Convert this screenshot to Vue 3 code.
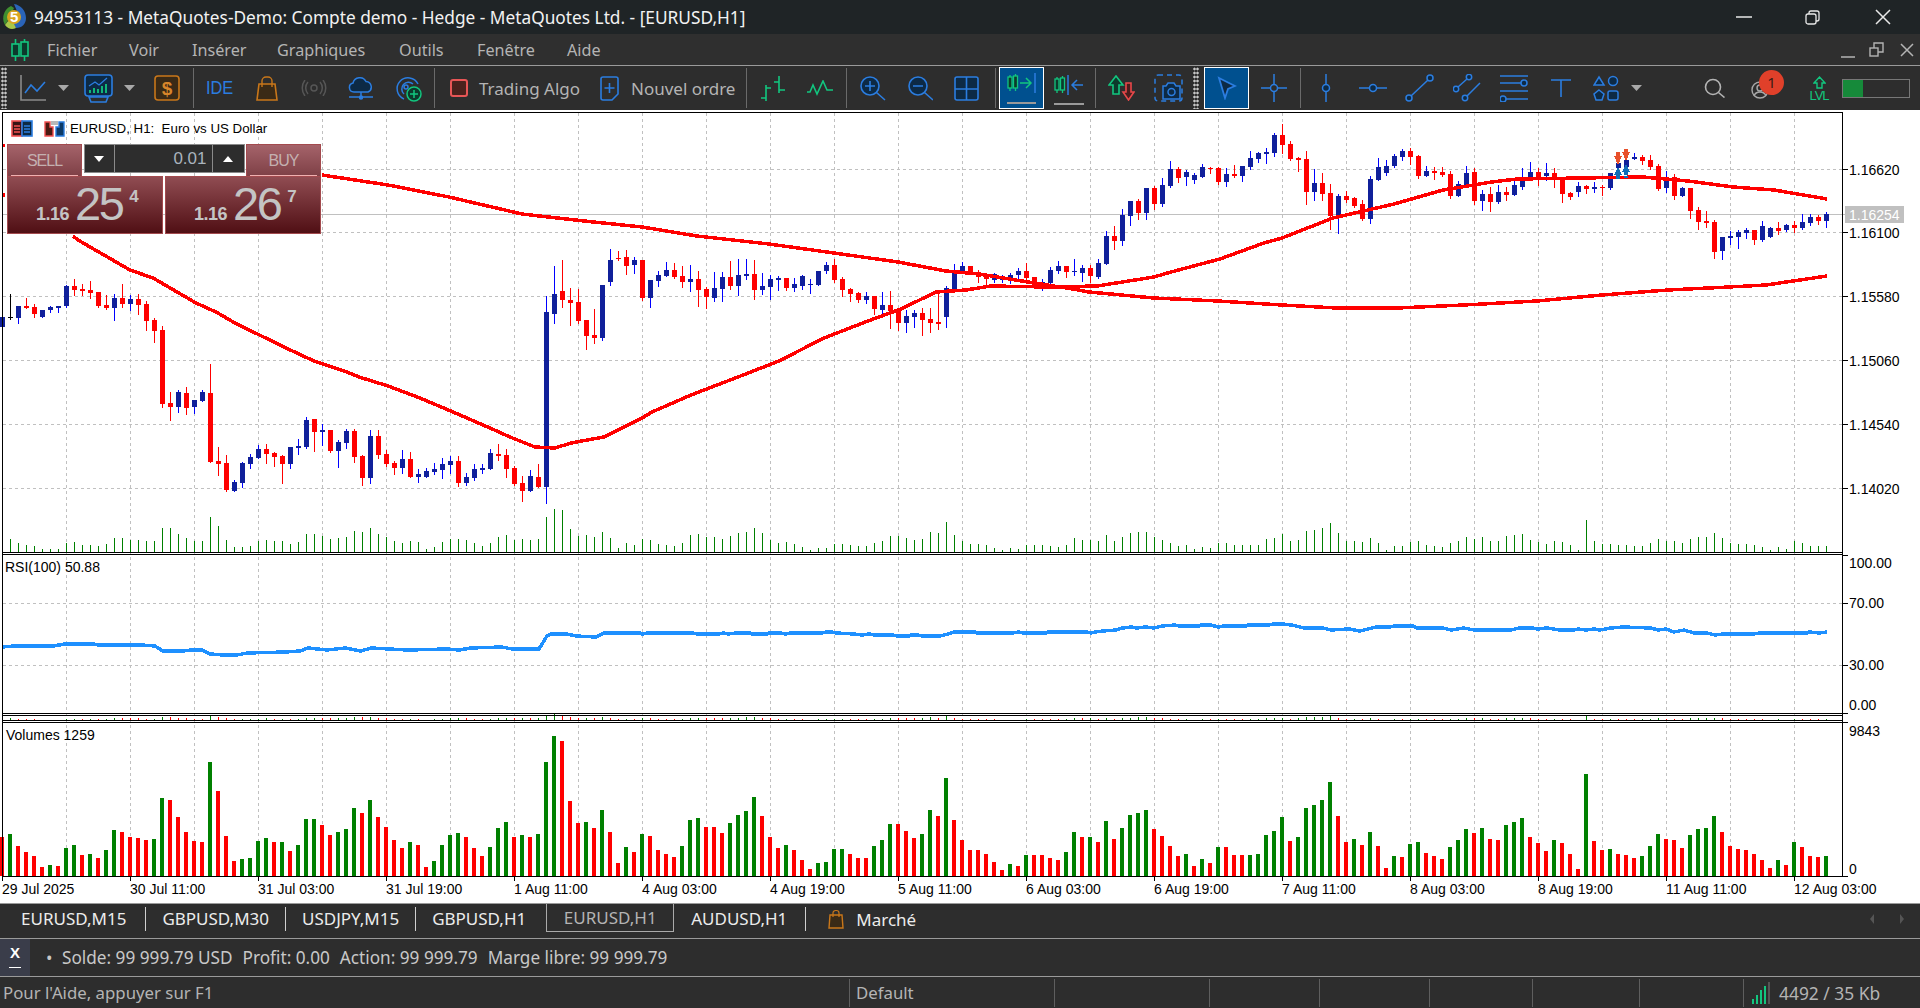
<template>
  <div class="app">
    <div class="title">
      <svg class="logo" width="24" height="26" viewBox="0 0 24 26">
        <path d="M3 21C-1 14 2 5 9 2l3 2-4 9z" fill="#3f8f2f" />
        <path d="M12 0c7 1 12 7 12 14 0 6-4 10-10 10l-3-4 6-8z" fill="#2a64b8" />
        <path d="M3 21c3 4 7 5 11 3l-3-6-5-1z" fill="#a8c84a" />
        <circle cx="12" cy="13" r="7" fill="#d9a520" />
        <text x="8" y="18" class="logo-five">5</text>
      </svg>
      <span class="title-text">94953113 - MetaQuotes-Demo: Compte demo - Hedge - MetaQuotes Ltd. - [EURUSD,H1]</span>
      <svg class="win-min" width="16" height="2" viewBox="0 0 16 2"><path d="M0 1H16" stroke="#e8e8e8" stroke-width="1.5" /></svg>
      <svg class="win-max" width="15" height="15" viewBox="0 0 15 15" fill="none" stroke="#e8e8e8" stroke-width="1.3">
        <rect x="1" y="4" width="10" height="10" rx="2" />
        <path d="M4 4V3a2 2 0 0 1 2-2h6a2 2 0 0 1 2 2v6a2 2 0 0 1-2 2h-1" />
      </svg>
      <svg class="win-close" width="16" height="16" viewBox="0 0 16 16"><path d="M1 1L15 15M15 1L1 15" stroke="#e8e8e8" stroke-width="1.5" /></svg>
    </div>

    <div class="menu">
      <svg class="menu-icon" width="18" height="22" viewBox="0 0 18 22" fill="#0c3a2c" stroke="#12c67f" stroke-width="1.6">
        <path d="M4.5 0V22M13.5 0V22" />
        <rect x="1" y="5" width="7" height="12" />
        <rect x="10" y="3" width="7" height="14" />
      </svg>
      <span v-for="m in menuItems" :key="m.label" :class="['menu-item', m.cls]">{{ m.label }}</span>
      <svg class="mdi-min" width="14" height="2" viewBox="0 0 14 2"><path d="M0 1H14" stroke="#b4b4b4" stroke-width="1.5" /></svg>
      <svg class="mdi-max" width="15" height="15" viewBox="0 0 15 15" fill="none" stroke="#b4b4b4" stroke-width="1.4">
        <rect x="1" y="6" width="8" height="8" />
        <path d="M5 6V1H14V10H9" />
      </svg>
      <svg class="mdi-close" width="14" height="14" viewBox="0 0 14 14"><path d="M1 1L13 13M13 1L1 13" stroke="#b4b4b4" stroke-width="1.5" /></svg>
    </div>

    <div class="toolbar">
      <span class="grip grip-a"></span>
      <svg class="t-line" width="26" height="26" viewBox="0 0 26 26" fill="none">
        <path d="M1 0V25H26" stroke="#8a8a8a" stroke-width="1.6" />
        <path d="M5 18L11 10L17 16L25 7" stroke="#2b7de0" stroke-width="1.6" />
      </svg>
      <svg class="drop t-drop1" width="11" height="6" viewBox="0 0 11 6"><path d="M0 0H11L5.500 6z" fill="#a8a8a8" /></svg>
      <svg class="t-sig" width="29" height="29" viewBox="0 0 29 29" fill="none" stroke="#2b7de0" stroke-width="1.6">
        <rect x="1" y="1" width="27" height="21" rx="3" fill="#0d2a45" />
        <path d="M5 23H24L22 28H7z" />
        <path d="M5 12L11 8L15 11L23 4" stroke-width="1.3" />
        <path d="M6 19V16M10 19V14M14 19V15M18 19V12M22 19V10" stroke="#12c67f" stroke-width="1.8" />
      </svg>
      <svg class="drop t-drop2" width="11" height="6" viewBox="0 0 11 6"><path d="M0 0H11L5.500 6z" fill="#a8a8a8" /></svg>
      <svg class="t-dollar" width="26" height="26" viewBox="0 0 26 26">
        <rect x="1" y="1" width="24" height="24" rx="3" fill="#3a2a16" stroke="#c9771a" stroke-width="1.6" />
        <text x="13" y="19.500" class="dollar">$</text>
      </svg>
      <span class="sep sep-a"></span>
      <span class="ide">IDE</span>
      <svg class="t-bag" width="22" height="25" viewBox="0 0 22 25">
        <path d="M3 8H19L21 24H1z" fill="#3a2a16" stroke="#c9771a" stroke-width="1.6" />
        <path d="M6 11V5a4 4 0 0 1 4-4h2a4 4 0 0 1 4 4v6" fill="none" stroke="#c9771a" stroke-width="1.4" />
      </svg>
      <svg class="t-wifi" width="26" height="16" viewBox="0 0 26 16" fill="none" stroke="#565656" stroke-width="1.5">
        <circle cx="13" cy="8" r="3" />
        <path d="M7 2a9 9 0 0 0 0 12M19 2a9 9 0 0 1 0 12M4 0a13 13 0 0 0 0 16M22 0a13 13 0 0 1 0 16" />
      </svg>
      <svg class="t-cloud" width="26" height="23" viewBox="0 0 26 23" fill="none" stroke="#2b7de0" stroke-width="1.5">
        <path d="M6 15a4.500 4.500 0 0 1-1-8.900A7 7 0 0 1 18 4.500 5.500 5.500 0 0 1 20 15z" fill="#0d2a45" />
        <path d="M13 15V20M1 20H25" />
        <circle cx="13" cy="20.500" r="1.500" fill="#2b7de0" />
      </svg>
      <svg class="t-sigplus" width="27" height="27" viewBox="0 0 27 27" fill="none" stroke="#2b7de0" stroke-width="1.5">
        <path d="M9 24A11 11 0 1 1 23 9" />
        <path d="M9 19A6 6 0 1 1 18 9" />
        <circle cx="11" cy="12" r="2" />
        <circle cx="19" cy="19" r="7" fill="#0c3a2c" stroke="#12c67f" />
        <path d="M19 15V23M15 19H23" stroke="#12c67f" />
      </svg>
      <span class="sep sep-b"></span>
      <span class="red-square"></span>
      <span class="tool-text t-algo">Trading Algo</span>
      <svg class="t-doc" width="19" height="25" viewBox="0 0 19 25" fill="none" stroke="#2b7de0" stroke-width="1.6">
        <path d="M3 1H16a2 2 0 0 1 2 2V18L12 24H3a2 2 0 0 1-2-2V3a2 2 0 0 1 2-2z" />
        <path d="M9.500 7V17M4.500 12H14.500" />
      </svg>
      <span class="tool-text t-order">Nouvel ordre</span>
      <span class="sep sep-c"></span>
      <svg class="t-bars" width="26" height="25" viewBox="0 0 26 25" fill="none" stroke="#12c67f" stroke-width="1.6">
        <path d="M6 9V25M1 22H6M6 12H11M19 0V17M14 6H19M19 14H25" />
      </svg>
      <svg class="t-wave" width="26" height="16" viewBox="0 0 26 16" fill="none" stroke="#12c67f" stroke-width="1.6">
        <path d="M0 12H3L6 5L10 14L16 1L20 10H26" />
      </svg>
      <span class="sep sep-d"></span>
      <svg class="t-zoomin" width="26" height="25" viewBox="0 0 26 25" fill="none" stroke="#2b7de0" stroke-width="1.6">
        <circle cx="10" cy="10" r="9" fill="#0d2a45" />
        <path d="M10 5V15M5 10H15M16.500 16.500L25 24" />
      </svg>
      <svg class="t-zoomout" width="25" height="25" viewBox="0 0 25 25" fill="none" stroke="#2b7de0" stroke-width="1.6">
        <circle cx="10" cy="10" r="9" fill="#0d2a45" />
        <path d="M5 10H15M16.500 16.500L25 24" />
      </svg>
      <svg class="t-grid" width="25" height="25" viewBox="0 0 25 25" fill="#0d2a45" stroke="#2b7de0" stroke-width="1.6">
        <rect x="1" y="1" width="23" height="23" rx="2" />
        <path d="M12.500 1V24M1 13H24" />
      </svg>
      <span class="sep sep-e"></span>
      <span class="tool-btn t-shift">
        <svg width="29" height="34" viewBox="0 0 29 34" fill="none" stroke="#12c67f" stroke-width="1.3">
          <path d="M3 4V20M8.500 3V20" />
          <rect x="1" y="6" width="4" height="11" fill="#0c3a2c" />
          <rect x="6.500" y="5" width="4" height="12" fill="#0c3a2c" />
          <path d="M13 12H24M19 7L24 12L19 17" stroke-width="1.5" />
          <path d="M28 2V22" stroke="#2b7de0" stroke-width="1.5" />
          <path d="M0 32H29" stroke="#9a9a9a" stroke-width="2" />
        </svg>
      </span>
      <svg class="t-autoscroll" width="30" height="34" viewBox="0 0 30 34" fill="none" stroke="#12c67f" stroke-width="1.3">
        <path d="M3 6V22M8.500 5V22" />
        <rect x="1" y="8" width="4" height="11" fill="#0c3a2c" />
        <rect x="6.500" y="7" width="4" height="12" fill="#0c3a2c" />
        <path d="M14 4V24" stroke="#2b7de0" stroke-width="1.5" />
        <path d="M29 14H18M23 9L18 14L23 19" stroke="#2b7de0" stroke-width="1.5" />
        <path d="M0 33H30" stroke="#9a9a9a" stroke-width="2" />
      </svg>
      <span class="sep sep-f"></span>
      <svg class="t-arrows" width="27" height="26" viewBox="0 0 27 26" fill="none" stroke-width="1.6">
        <path d="M5 10H1L8 1L15 10H11V19H5z" fill="#0c3a2c" stroke="#12c67f" />
        <path d="M18 8H23V17H26L20.500 25L15 17H18z" fill="#4a1d1d" stroke="#e8484a" />
      </svg>
      <svg class="t-camera" width="29" height="28" viewBox="0 0 29 28" fill="none" stroke="#2b7de0" stroke-width="1.5">
        <rect x="1" y="1" width="27" height="26" rx="3" stroke-dasharray="5 4" />
        <path d="M9 12H12L14 9H20L22 12H26V25H9z" fill="#0d2a45" />
        <circle cx="17.500" cy="18" r="3.500" />
      </svg>
      <span class="grip grip-b"></span>
      <span class="tool-btn t-cursor">
        <svg width="20" height="24" viewBox="0 0 20 24" fill="#0d2a45" stroke="#2b7de0" stroke-width="1.8">
          <path d="M2 2L18 10L11 13L8 22z" />
        </svg>
      </span>
      <svg class="t-cross" width="26" height="28" viewBox="0 0 26 28" fill="none" stroke="#2b7de0" stroke-width="1.5">
        <path d="M13 0V10M13 18V28M0 14H9M17 14H26" />
        <circle cx="13" cy="14" r="3.500" />
      </svg>
      <span class="sep sep-g"></span>
      <svg class="t-vline" width="10" height="28" viewBox="0 0 10 28" fill="none" stroke="#2b7de0" stroke-width="1.5">
        <path d="M5 0V10M5 18V28" />
        <circle cx="5" cy="14" r="3.500" fill="#0d2a45" />
      </svg>
      <svg class="t-hline" width="28" height="10" viewBox="0 0 28 10" fill="none" stroke="#2b7de0" stroke-width="1.5">
        <path d="M0 5H10M18 5H28" />
        <circle cx="14" cy="5" r="3.500" fill="#0d2a45" />
      </svg>
      <svg class="t-trend" width="29" height="28" viewBox="0 0 29 28" fill="none" stroke="#2b7de0" stroke-width="1.5">
        <path d="M6 22L23 6" />
        <circle cx="4" cy="24" r="3" fill="#0d2a45" />
        <circle cx="25" cy="4" r="3" fill="#0d2a45" />
      </svg>
      <svg class="t-channel" width="28" height="28" viewBox="0 0 28 28" fill="none" stroke="#2b7de0" stroke-width="1.5">
        <path d="M5 13L14 5M14 22L27 9" />
        <circle cx="3" cy="15" r="2.700" fill="#0d2a45" />
        <circle cx="16" cy="3" r="2.700" fill="#0d2a45" />
        <circle cx="12" cy="24" r="2.700" fill="#0d2a45" />
      </svg>
      <svg class="t-fib" width="28" height="27" viewBox="0 0 28 27" fill="none" stroke="#2b7de0" stroke-width="1.5">
        <path d="M0 1H28M0 8H21M0 16H28M6 24H28" />
        <circle cx="24" cy="8" r="3" fill="#0d2a45" />
        <circle cx="3" cy="24" r="3" fill="#0d2a45" />
      </svg>
      <svg class="t-text" width="20" height="18" viewBox="0 0 20 18" fill="none" stroke="#2b7de0" stroke-width="1.6">
        <path d="M0 1H20M10 1V18" />
      </svg>
      <svg class="t-shapes" width="26" height="26" viewBox="0 0 26 26" fill="#0d2a45" stroke="#2b7de0" stroke-width="1.5">
        <path d="M6 2L11 10H1z" />
        <circle cx="20" cy="6" r="4.500" />
        <path d="M6 15L11 19L9 25H3L1 19z" />
        <rect x="15" y="16" width="10" height="9" rx="2" />
      </svg>
      <svg class="drop t-drop3" width="11" height="6" viewBox="0 0 11 6"><path d="M0 0H11L5.500 6z" fill="#a8a8a8" /></svg>
      <svg class="t-search" width="21" height="20" viewBox="0 0 21 20" fill="none" stroke="#b4b4b4" stroke-width="1.6">
        <circle cx="9" cy="9" r="7.500" />
        <path d="M14.500 14.500L20.500 19.500" />
      </svg>
      <span class="t-user">
        <svg width="18" height="18" viewBox="0 0 18 18" fill="none" stroke="#a8a8a8" stroke-width="1.4">
          <circle cx="9" cy="9" r="8" />
          <circle cx="9" cy="7" r="3" />
          <path d="M3 15c1-3 3-4 6-4s5 1 6 4" />
        </svg>
        <span class="badge">1</span>
      </span>
      <span class="t-lvl">
        <svg width="13" height="13" viewBox="0 0 13 13" fill="none" stroke="#12c67f" stroke-width="1.4">
          <path d="M1 7L6.500 1L12 7H9V12H4V7z" />
        </svg>
        <span class="lvl-text">LVL</span>
      </span>
      <span class="t-progress"><span class="t-progress-fill"></span></span>
    </div>

    <div class="chart">
      <svg class="plot" width="1920" height="793" viewBox="0 110 1920 793" shape-rendering="crispEdges">
        <!-- grille -->
        <path v-for="x in gridX" :key="'g' + x" :d="`M${x}.5 113V876`" class="grid" />
        <path v-for="y in gridY" :key="'h' + y" :d="`M3 ${y}.5H1842`" class="grid" />
        <path d="M3 214.500H1904" stroke="#c0c0c0" fill="none" />

        <!-- volumes dans le graphique principal -->
        <rect v-for="b in vols" :key="'mv' + b.i" :x="b.x" :y="552 - b.small" width="1" :height="b.small" fill="#008000" />

        <!-- bougies -->
        <template v-for="c in candles" :key="'c' + c.i">
          <rect :x="c.x" :y="c.h" width="1" :height="c.l - c.h" :fill="c.wick" />
          <rect :x="c.x - 2" :y="c.t" width="5" :height="Math.max(c.b - c.t, 1)" :fill="c.body" />
        </template>

        <!-- moyennes mobiles -->
        <polyline :points="slowMa" class="ma" />
        <polyline :points="fastMa" class="ma" />

        <!-- fleches de trades -->
        <g fill="#e8502a">
          <path d="M1614 156H1622L1618 165zM1622 152H1630L1626 161z" />
          <path d="M1616 152H1620V156H1616zM1624 149H1628V152H1624z" />
        </g>
        <g fill="#0f6cb8">
          <path d="M1614 175H1622L1618 167zM1622 172H1630L1626 164z" />
          <path d="M1616 175H1620V179H1616zM1624 172H1628V175H1624zM1624 176H1628V178H1624z" />
        </g>
        <rect x="3" y="144" width="2" height="3" fill="#ff0000" />
        <rect x="3" y="193" width="2" height="4" fill="#ff0000" />

        <!-- RSI -->
        <polyline :points="rsi" class="rsi" />

        <!-- volumes -->
        <rect v-for="b in vols" :key="'v' + b.i" :x="b.x - 2" :y="876 - b.height" width="4" :height="b.height" :fill="b.color" />
        <rect v-for="b in vols" :key="'t' + b.i" :x="b.x" :y="720 - b.tiny" width="1" :height="b.tiny" :fill="b.color" />

        <!-- cadres -->
        <g fill="#000">
          <rect x="2" y="112" width="1841" height="1" />
          <rect x="2" y="112" width="1" height="765" />
          <rect x="1842" y="112" width="1" height="765" />
          <rect x="2" y="552" width="1841" height="1" />
          <rect x="2" y="554" width="1841" height="1" />
          <rect x="2" y="713" width="1841" height="1" />
          <rect x="2" y="715" width="1841" height="1" />
          <rect x="2" y="720" width="1841" height="1" />
          <rect x="2" y="722" width="1841" height="1" />
          <rect x="2" y="876" width="1841" height="1" />
          <rect v-for="s in scale" :key="'st' + s.tick" x="1843" :y="s.tick" width="5" height="1" />
          <rect v-for="t in times" :key="'tt' + t.x" :x="t.x" y="877" width="1" height="4" />
        </g>

        <g shape-rendering="auto">
          <rect x="1845" y="206" width="59" height="17" fill="#c0c0c0" />
          <text x="1849" y="220" class="lbl tag">1.16254</text>
          <text v-for="s in scale" :key="s.text" x="1849" :y="s.y" class="lbl">{{ s.text }}</text>
          <text v-for="t in times" :key="t.text" :x="t.x" y="894" class="lbl">{{ t.text }}</text>
          <text x="5" y="572" class="lbl">RSI(100) 50.88</text>
          <text x="6" y="740" class="lbl">Volumes 1259</text>
        </g>
      </svg>

      <div class="chart-head">
        <svg width="22" height="17" viewBox="0 0 22 17">
          <rect x="1" y="1" width="10" height="15" fill="#3a1414" stroke="#f25050" stroke-width="1.6" />
          <rect x="11" y="1" width="10" height="15" fill="#0d2a45" stroke="#2b7de0" stroke-width="1.6" />
          <path d="M3 6H9M3 9H9M3 12H9" stroke="#f25050" stroke-width="1.5" />
          <path d="M13 6H19M13 9H19M13 12H19" stroke="#2b7de0" stroke-width="1.5" />
        </svg>
        <svg class="head-two" width="21" height="17" viewBox="0 0 21 17">
          <path d="M1 2H6V7H9V16H1z" fill="#4a1a12" stroke="#f25050" stroke-width="1.4" />
          <path d="M20 2H15V7H12V16H20z" fill="#0d3a66" stroke="#2b7de0" stroke-width="1.4" />
          <rect x="7" y="1" width="7" height="4" fill="#b8b8b8" />
        </svg>
        <span class="head-text">EURUSD, H1:&nbsp; Euro vs US Dollar</span>
      </div>

      <div class="oneclick">
        <div class="oc-top">
          <div class="oc-side">SELL</div>
          <div class="oc-lot">
            <span class="oc-step"><i class="tri-down"></i></span>
            <span class="oc-value">0.01</span>
            <span class="oc-step last"><i class="tri-up"></i></span>
          </div>
          <div class="oc-side">BUY</div>
        </div>
        <div class="oc-prices">
          <div class="oc-price">
            <span class="p-small">1.16</span><span class="p-big">25</span><span class="p-sup">4</span>
          </div>
          <div class="oc-price">
            <span class="p-small">1.16</span><span class="p-big">26</span><span class="p-sup">7</span>
          </div>
        </div>
      </div>
    </div>

    <div class="tabs">
      <span v-for="t in tabs" :key="t" :class="['tab', { active: t === 'EURUSD,H1', 'no-line': t === 'GBPUSD,H1' }]">{{ t }}</span>
      <svg class="tab-bag" width="16" height="20" viewBox="0 0 16 20">
        <path d="M2 6H14L15 19H1z" fill="#3a2a16" stroke="#c9771a" stroke-width="1.4" />
        <path d="M5 8V4a2.500 2.500 0 0 1 2.500-2.500h1A2.500 2.500 0 0 1 11 4v4" fill="none" stroke="#c9771a" stroke-width="1.2" />
      </svg>
      <span class="tab-label">Marché</span>
      <span class="tab-arrows"><i class="arrow-left"></i><i class="arrow-right"></i></span>
    </div>

    <div class="info">
      <div class="info-close"><b>X</b><span class="info-dash"></span></div>
      <span class="dot">•</span>
      <span class="info-item first">Solde: 99 999.79 USD</span>
      <span class="info-item">Profit: 0.00</span>
      <span class="info-item">Action: 99 999.79</span>
      <span class="info-item">Marge libre: 99 999.79</span>
    </div>

    <div class="status">
      <span class="st-help">Pour l'Aide, appuyer sur F1</span>
      <span class="st-cell st-default">Default</span>
      <span class="st-cell st-a"></span>
      <span class="st-cell st-b"></span>
      <span class="st-cell st-c"></span>
      <span class="st-cell st-d"></span>
      <span class="st-cell st-e"></span>
      <span class="st-cell st-f"></span>
      <span class="st-cell st-net">
        <svg width="20" height="24" viewBox="0 0 20 24" fill="#12c67f">
          <rect x="0" y="18" width="2" height="5" />
          <rect x="4" y="14" width="2" height="9" />
          <rect x="8" y="9" width="2" height="14" />
          <rect x="12" y="5" width="2" height="18" />
          <rect x="16" y="1" width="2" height="22" fill="#555" />
        </svg>
        <span class="st-net-text">4492 / 35 Kb</span>
      </span>
    </div>
  </div>
</template>

<script setup>
const menuItems = [
  { label: 'Fichier', cls: 'm-a' },
  { label: 'Voir', cls: 'm-b' },
  { label: 'Insérer', cls: 'm-c' },
  { label: 'Graphiques', cls: 'm-d' },
  { label: 'Outils', cls: 'm-e' },
  { label: 'Fenêtre', cls: 'm-f' },
  { label: 'Aide', cls: 'm-g' }
]

const tabs = ['EURUSD,M15', 'GBPUSD,M30', 'USDJPY,M15', 'GBPUSD,H1', 'EURUSD,H1', 'AUDUSD,H1']

const gridX = Array.from({ length: 29 }, (_, k) => 2 + 64 * k)
const gridY = [169, 232, 296, 360, 424, 488, 603, 665]

const timeLabels = ['29 Jul 2025', '30 Jul 11:00', '31 Jul 03:00', '31 Jul 19:00', '1 Aug 11:00', '4 Aug 03:00', '4 Aug 19:00', '5 Aug 11:00',
  '6 Aug 03:00', '6 Aug 19:00', '7 Aug 11:00', '8 Aug 03:00', '8 Aug 19:00', '11 Aug 11:00', '12 Aug 03:00']
const times = timeLabels.map((text, k) => ({ text, x: 2 + 128 * k }))

const scale = [
  { text: '1.16620', tick: 169, y: 175 },
  { text: '1.16100', tick: 232, y: 238 },
  { text: '1.15580', tick: 296, y: 302 },
  { text: '1.15060', tick: 360, y: 366 },
  { text: '1.14540', tick: 424, y: 430 },
  { text: '1.14020', tick: 488, y: 494 },
  { text: '100.00', tick: 555, y: 568 },
  { text: '70.00', tick: 603, y: 608 },
  { text: '30.00', tick: 665, y: 670 },
  { text: '0.00', tick: 713, y: 710 },
  { text: '9843', tick: 722, y: 736 },
  { text: '0', tick: 876, y: 874 }
]

// 0 = hausse (bleu), 1 = baisse (rouge), 2 = doji noir ; [type, haut, corps haut, corps bas, bas]
const candleRows = [
  [240, [[0,232,232,262,262],[2,162,232,233,238],[0,198,198,233,248],[1,175,198,204,205],[1,192,201,222,230],[0,210,210,230,230],[0,198,202,210,215],[0,198,198,203,215],[0,135,138,197,200],[1,117,138,150,165],
    [1,132,147,152,165],[1,123,150,158,173],[1,156,156,198,200],[1,165,195,204,208],[0,162,174,204,240],[1,132,174,192,200],[0,165,177,192,210],[1,162,177,195,222],[1,183,192,243,270],[1,234,240,273,306],
    [1,258,270,492,500],[1,456,489,501,540],[0,450,456,501,516],[1,441,459,504,522],[0,480,480,501,520],[0,450,456,483,483],[1,372,459,666,666],[1,621,663,672,705],[1,645,669,750,752],[0,720,726,752,752],
    [0,666,669,729,741],[0,642,651,672,684],[0,615,627,654,654],[1,612,627,642,669],[1,636,639,651,678],[1,645,648,672,729],[0,621,621,672,684],[0,597,618,624,642],[0,531,540,621,624],[1,537,537,576,633],
    [0,552,570,576,615],[1,570,570,633,636],[0,600,606,633,681],[0,567,573,609,624],[1,567,573,651,666],[1,645,648,714,735],[0,570,588,714,729],[1,570,588,645,654],[1,630,642,672,678],[1,663,669,684,702],
    [0,630,657,684,699],[1,636,657,711,711],[0,687,702,711,726],[0,684,693,711,711],[0,669,687,696,702],[0,654,672,690,714],[0,648,663,675,699],[1,648,663,729,738],[0,699,711,729,735],[0,672,687,714,720],
    [0,672,684,690,699],[0,627,639,687,687],[1,612,642,648,660],[1,627,645,687,711],[1,678,684,732,735],[1,708,729,753,783],[0,690,708,753,753],[1,672,711,741,741],[0,168,216,741,789],[0,78,162,222,249],
    [1,60,153,180,201],[1,144,180,189,255],[1,147,186,243,249],[1,240,240,288,327],[1,207,285,294,309],[0,135,135,294,300],[0,27,60,126,135],[1,33,54,58,60],[1,30,51,78,102],[0,51,60,75,99]]],
  [110, [[1,450,450,565,570],[0,510,510,564,591],[0,483,495,513,528],[0,456,480,498,498],[1,459,480,501,504],[1,468,498,516,531],[0,465,507,516,543],[1,483,507,540,588],[1,531,537,561,594],[0,486,534,564,573],
    [0,486,501,537,573],[1,453,501,528,537],[0,447,495,528,555],[0,447,492,498,507],[1,450,492,540,567],[0,489,528,540,552],[0,495,507,531,567],[0,498,504,510,540],[1,504,504,534,540],[0,504,522,534,543],
    [0,495,498,528,537],[0,507,522,525,549],[0,483,483,525,525],[0,456,465,483,489],[1,447,465,510,516],[1,501,507,540,558],[1,534,537,552,573],[1,546,549,570,576],[0,546,558,570,579],[1,558,558,597,612],
    [0,546,585,600,621],[1,543,585,603,654],[1,603,603,639,660],[0,600,618,639,666],[0,600,609,621,651],[1,594,609,630,675],[1,594,627,639,666],[1,543,636,641,657],[0,528,534,621,651],[0,462,480,540,540],
    [0,456,468,483,483],[1,468,468,486,490],[1,480,487,500,516],[1,495,498,506,528],[0,489,492,510,516],[0,495,504,510,516],[0,489,495,510,519],[0,474,483,495,507],[1,459,483,504,507],[1,501,501,528,531],
    [0,507,516,528,540],[0,471,480,519,519],[0,453,468,483,489],[1,468,468,486,501],[0,447,483,486,495],[0,465,474,489,513],[1,465,474,498,516],[0,447,459,501,504],[0,363,378,462,462],[1,348,378,393,417],
    [0,297,315,393,405],[0,273,273,318,345],[1,267,273,309,327],[0,234,234,309,327],[1,228,234,282,297],[0,204,225,282,288],[0,153,177,228,231],[1,171,177,204,216],[0,180,186,201,225],[0,189,195,210,219],
    [0,162,171,201,201],[1,171,174,177,189],[1,171,174,216,222],[0,174,192,216,228],[1,165,192,198,201],[0,168,168,198,213],[0,123,144,171,177],[0,126,129,147,156],[0,114,126,132,159],[0,69,75,129,138]]],
  [110, [[1,42,75,105,129],[1,93,102,147,150],[1,141,144,150,183],[1,123,147,246,282],[0,177,219,246,270],[1,189,219,252,270],[1,222,249,318,357],[0,252,258,318,369],[1,243,258,270,276],[1,261,264,288,291],
    [1,270,282,327,330],[0,198,207,327,339],[0,144,171,210,210],[0,150,168,189,195],[0,132,138,168,171],[0,117,123,141,150],[1,114,123,141,162],[1,135,138,198,204],[0,168,183,198,198],[1,171,183,189,207],
    [1,171,186,195,198],[1,183,192,258,264],[0,213,222,258,258],[0,168,189,225,225],[1,174,186,273,282],[0,240,252,273,300],[1,231,252,276,303],[0,225,246,276,279],[1,231,246,255,270],[0,213,225,255,255],
    [0,174,201,231,237],[0,156,186,204,207],[1,174,186,207,225],[0,159,189,198,210],[1,174,189,204,231],[1,204,204,252,276],[1,246,249,261,267],[0,216,228,246,258],[1,225,228,237,249],[0,216,231,237,246],
    [1,225,231,234,255],[0,189,189,234,238],[0,150,160,175,178],[0,140,150,170,178],[0,129,141,147,147],[1,135,141,153,162],[1,135,150,171,177],[1,162,168,237,240],[0,183,201,234,246],[1,192,201,258,267],
    [0,231,234,258,258],[1,234,234,303,324],[1,291,300,336,357],[1,303,333,339,351],[1,330,336,426,444],[0,381,381,423,447],[0,363,378,384,402],[0,360,366,381,414],[0,354,360,369,384],[1,360,360,390,402],
    [0,333,348,390,393],[0,351,354,381,381],[1,336,354,363,372],[0,342,345,360,363],[1,333,345,354,366],[0,312,336,354,357],[0,312,321,339,345],[1,315,321,333,342],[0,306,312,333,351]]]
]

const colours = [
  { wick: '#0000ff', body: '#10209a' },
  { wick: '#ff0000', body: '#ff0000' },
  { wick: '#000000', body: '#000000' }
]

let index = 0
const candles = []
for (const [off, rows] of candleRows) {
  for (const [kind, h, t, b, l] of rows) {
    const toY = (z) => Math.round(off + z / 3)
    candles.push({ i: index, x: 2 + 8 * index, h: toY(h), t: toY(t), b: toY(b), l: toY(l) + 1, ...colours[kind] })
    index++
  }
}

// hauteur lue sur le zoom ; negatif = barre rouge
const volumeRaw = [-981,972,-1008,-1026,-1038,-1071,1065,-1068,1014,1005,-1035,1032,-1044,1020,960,-966,-981,-984,-990,987,
  864,-870,-921,-966,-993,-996,756,-843,-978,-1053,1047,1044,993,984,-996,996,-1023,1005,927,927,
  -945,-975,966,957,894,-909,870,-921,-951,-990,-1014,996,-1005,-1071,1053,1005,975,969,-981,-1014,
  -1038,1011,954,936,-981,975,-981,972,756,678,-693,-873,-939,936,-954,900,-966,-1059,1011,-1026,
  972,-978,-1020,-1032,-1041,1008,930,924,-951,-951,-969,939,915,903,861,-918,-981,-1014,1005,-1020,
  -1050,-1077,1059,1056,1017,1017,-1032,-1044,-1044,1008,990,942,-942,-963,-984,972,900,-918,804,-930,
  -990,-1020,-1020,-1032,-1056,-1081,1062,-1068,1035,-1035,-1035,-1044,-1050,1026,966,-981,981,-996,933,-987,
  954,915,909,900,-957,-978,-1008,-1038,1032,-1068,1047,-1059,1011,-1011,-1035,-1035,1035,1032,975,963,
  921,-993,981,894,885,870,816,-918,-996,987,-1005,966,-1008,-1074,1038,-1041,1002,996,-1029,-1038,
  -1047,1011,990,957,-969,954,-987,-990,945,936,924,-981,-999,-1023,990,-999,-1032,-1077,792,-993,
  -1020,1017,-1032,-1035,-1044,1038,1008,972,-987,-990,-1014,975,957,954,918,-966,-1008,-1017,-1020,-1032,
  -1050,-1074,1050,-1065,996,-1011,-1038,-1041,1038]

const vols = volumeRaw.map((v, i) => {
  const height = Math.round(876 - (510 + Math.abs(v) / 3))
  return {
    i,
    x: 2 + 8 * i,
    height,
    small: Math.round(height * 0.31),
    tiny: Math.round(height * 0.04),
    color: v < 0 ? '#ff0000' : '#008000'
  }
})

const slowMa = [[322,175],[388,185],[449,197],[522,214],[584,221],[642,227],[697,236],[769,244],[834,253],[898,262],[946,271],[979,274],[1028,282],[1073,289],[1089,292],[1154,298],[1218,301],[1282,305],[1337,308],[1398,308],[1464,305],[1537,301],[1602,295],[1668,290],[1729,287],[1766,285],[1827,276]].join(' ')
const fastMa = [[73,236],[78,240],[130,270],[153,278],[196,303],[216,312],[235,323],[286,348],[314,361],[347,372],[359,377],[388,386],[420,398],[453,412],[490,428],[510,437],[535,447],[555,448],[571,443],[604,437],[624,427],[642,418],[652,412],[691,395],[738,377],[779,361],[824,338],[868,321],[901,309],[936,292],[966,290],[991,286],[1048,287],[1097,286],[1154,277],[1171,272],[1220,259],[1264,243],[1282,238],[1333,218],[1394,204],[1443,190],[1492,182],[1517,179],[1582,178],[1643,177],[1688,181],[1733,187],[1774,190],[1827,199]].join(' ')

const rsiRows = [
  [0, [[5,412],[35,409],[130,409],[160,403],[230,403],[240,406],[270,405],[290,404],[310,405],[345,406],[380,408],[400,424],[425,422],[445,424],[470,421],[495,421],[515,433],[550,436],[580,436],[605,428],[700,427],[735,423],[755,415],[800,421],[845,415],[885,424],[910,415],[1000,420],[1095,416],[1125,421],[1155,415],[1230,412],[1255,418],[1320,418],[1340,378],[1350,373],[1390,373],[1410,378],[1460,381],[1480,370],[1568,368]]],
  [640, [[5,372],[20,370],[130,370],[140,373],[190,373],[205,370],[215,373],[235,370],[270,370],[275,373],[310,373],[315,370],[345,370],[355,373],[370,370],[445,370],[455,366],[470,366],[480,370],[525,373],[545,374],[560,372],[575,376],[620,376],[630,379],[660,379],[665,376],[680,376],[690,379],[735,379],[755,373],[770,367],[820,367],[825,370],[915,370],[925,367],[940,370],[995,370],[1000,367],[1095,367],[1105,370],[1115,367],[1135,362],[1165,361],[1180,355],[1205,352],[1215,355],[1240,350],[1260,355],[1280,349],[1310,346],[1320,349],[1370,349],[1375,346],[1400,346],[1415,352],[1430,349],[1485,349],[1490,346],[1540,346],[1550,342],[1568,342]]],
  [1280, [[5,343],[30,346],[60,354],[105,354],[125,361],[170,358],[195,364],[235,352],[270,352],[280,349],[325,349],[335,354],[400,355],[420,361],[450,355],[475,361],[565,361],[585,355],[620,355],[630,358],[655,355],[685,361],[720,361],[730,358],[750,361],[770,358],[785,361],[810,355],[840,352],[910,355],[925,361],[945,358],[965,365],[990,361],[1015,370],[1045,370],[1065,376],[1085,373],[1130,373],[1160,373],[1175,370],[1290,370],[1295,367],[1320,370],[1340,367]]]
]
const rsi = rsiRows
  .flatMap(([off, pts]) => pts.map(([x, y]) => `${Math.round(off + x / 2.45)},${Math.round(510 + y / 3)}`))
  .join(' ')
</script>

<style>
html,
body {
  margin: 0;
  background: #2d2d2d;
}
</style>

<style scoped>
.app {
  width: 1920px;
  height: 1008px;
  display: flex;
  flex-direction: column;
  overflow: hidden;
  font-family: "Noto Sans", "Liberation Sans", sans-serif;
  background: #2d2d2d;
}

/* barre de titre */
.title {
  height: 34px;
  background: #1f2426;
  display: flex;
  align-items: center;
  flex-shrink: 0;
}
.logo {
  margin-left: 2px;
}
.logo-five {
  font: bold 15px "Liberation Sans", sans-serif;
  fill: #fff;
}
.title-text {
  margin-left: 8px;
  font-size: 17.300px;
  color: #f2f2f2;
  white-space: nowrap;
  width: 1676px;
}
.win-min {
  margin-left: 26px;
}
.win-max {
  margin-left: 53px;
}
.win-close {
  margin-left: 55px;
}

/* menu */
.menu {
  height: 31px;
  background: #2f2f2f;
  border-bottom: 1px solid #9a9a9a;
  display: flex;
  align-items: center;
  flex-shrink: 0;
}
.menu-icon {
  margin-left: 11px;
}
.menu-item {
  font-size: 16.2px;
  color: #b4b4b4;
  white-space: nowrap;
}
.m-a { margin-left: 18px; width: 82px; }
.m-b { width: 63px; }
.m-c { width: 85px; }
.m-d { width: 122px; }
.m-e { width: 78px; }
.m-f { width: 90px; }
.m-g { width: 1274px; }
.mdi-min { margin-top: 14px; }
.mdi-max { margin-left: 14px; }
.mdi-close { margin-left: 16px; }

/* barre d'outils */
.toolbar {
  height: 44px;
  background: #2d2d2d;
  display: flex;
  align-items: center;
  flex-shrink: 0;
}
.toolbar > svg,
.toolbar > span {
  flex-shrink: 0;
}
.grip {
  width: 6px;
  height: 42px;
  background-image: radial-gradient(#c8c8c8 1px, transparent 1.2px);
  background-size: 3px 4px;
}
.grip-a { margin-left: 1px; }
.t-line { margin-left: 13px; }
.t-drop1 { margin-left: 12px; }
.t-sig { margin-left: 15px; }
.t-drop2 { margin-left: 11px; }
.t-dollar { margin-left: 19px; }
.dollar {
  font: bold 19px "Liberation Sans", sans-serif;
  fill: #d8862a;
  text-anchor: middle;
}
.sep {
  width: 1px;
  height: 40px;
  background: #6a6a6a;
}
.sep-a { margin-left: 13px; }
.ide {
  margin-left: 12px;
  width: 27px;
  font: 19px "Liberation Sans", sans-serif;
  transform: scaleX(0.86);
  transform-origin: left;
  color: #2b7de0;
}
.t-bag { margin-left: 23px; }
.t-wifi { margin-left: 23px; }
.t-cloud { margin-left: 21px; }
.t-sigplus { margin-left: 21px; }
.sep-b { margin-left: 12px; }
.red-square {
  margin-left: 15px;
  width: 14px;
  height: 14px;
  border: 2px solid #e85656;
  border-radius: 3px;
  background: #4a221d;
}
.tool-text {
  font-size: 17px;
  color: #b4b4b4;
  white-space: nowrap;
}
.t-algo { margin-left: 11px; width: 100px; }
.t-doc { margin-left: 21px; }
.t-order { margin-left: 12px; width: 103px; }
.sep-c { margin-left: 12px; }
.t-bars { margin-left: 13px; }
.t-wave { margin-left: 21px; }
.sep-d { margin-left: 13px; }
.t-zoomin { margin-left: 13px; }
.t-zoomout { margin-left: 22px; }
.t-grid { margin-left: 21px; }
.sep-e { margin-left: 16px; }
.tool-btn {
  box-sizing: border-box;
  width: 45px;
  height: 42px;
  background: #00508f;
  border: 1px solid #fff;
  display: flex;
  align-items: center;
  justify-content: center;
}
.t-shift { margin-left: 3px; }
.t-autoscroll { margin-left: 10px; }
.sep-f { margin-left: 11px; }
.t-arrows { margin-left: 12px; }
.t-camera { margin-left: 19px; }
.grip-b { margin-left: 10px; }
.t-cursor { margin-left: 5px; }
.t-cross { margin-left: 12px; }
.sep-g { margin-left: 13px; }
.t-vline { margin-left: 20px; }
.t-hline { margin-left: 28px; }
.t-trend { margin-left: 18px; }
.t-channel { margin-left: 19px; }
.t-fib { margin-left: 19px; }
.t-text { margin-left: 23px; }
.t-shapes { margin-left: 22px; }
.t-drop3 { margin-left: 12px; }
.t-search { margin-left: 62px; }
.t-user {
  position: relative;
  margin-left: 26px;
  width: 18px;
  height: 18px;
  margin-top: 4px;
}
.badge {
  position: absolute;
  left: 8px;
  top: -11px;
  width: 25px;
  height: 25px;
  border-radius: 50%;
  background: #e0402a;
  color: #3a1a14;
  font-size: 15px;
  text-align: center;
  line-height: 25px;
}
.t-lvl {
  margin-left: 40px;
  width: 20px;
  display: flex;
  flex-direction: column;
  align-items: center;
}
.lvl-text {
  font: 13px/11px "Liberation Sans", sans-serif;
  letter-spacing: -1px;
  color: #12c67f;
  margin-top: 1px;
}
.t-progress {
  margin-left: 13px;
  box-sizing: border-box;
  width: 68px;
  height: 19px;
  border: 1px solid #777;
}
.t-progress-fill {
  display: block;
  width: 20px;
  height: 100%;
  background: #168a3a;
}

/* graphique */
.chart {
  position: relative;
  height: 793px;
  background: #fff;
  flex-shrink: 0;
}
.plot {
  display: block;
}
.grid {
  fill: none;
  stroke: #c0c0c0;
  stroke-dasharray: 3 3;
}
.ma {
  fill: none;
  stroke: #ff0000;
  stroke-width: 3.5;
}
.rsi {
  fill: none;
  stroke: #1e90ff;
  stroke-width: 3.5;
}
.lbl {
  font: 14px "Liberation Sans", sans-serif;
  fill: #000;
}
.tag {
  fill: #fff;
}
.chart-head {
  position: absolute;
  left: 11px;
  top: 10px;
  display: flex;
  align-items: center;
  height: 17px;
}
.head-two {
  margin-left: 11px;
}
.head-text {
  margin-left: 5px;
  font: 13.3px "Liberation Sans", sans-serif;
  color: #000;
  white-space: nowrap;
}

.oneclick {
  position: absolute;
  left: 7px;
  top: 34px;
  width: 314px;
  font-family: "Liberation Sans", sans-serif;
}
.oc-top {
  display: flex;
  justify-content: space-between;
  height: 32px;
}
.oc-side {
  box-sizing: border-box;
  width: 75px;
  height: 32px;
  background: linear-gradient(#a5636a, #7e4046);
  border: 1px solid #a34a4e;
  border-bottom: 0;
  color: #c4b0b0;
  font-size: 16px;
  letter-spacing: -1px;
  text-align: center;
  line-height: 32px;
  position: relative;
}
.oc-side::after {
  content: "";
  position: absolute;
  left: 3px;
  right: 3px;
  bottom: 0;
  height: 1px;
  background: #f0b0b0;
}
.oc-lot {
  box-sizing: border-box;
  width: 161px;
  height: 29px;
  background: #2d2d2d;
  border: 1px solid #8a8a8a;
  display: flex;
  align-items: center;
}
.oc-step {
  width: 29px;
  height: 100%;
  border-right: 1px solid #8a8a8a;
  display: flex;
  align-items: center;
  justify-content: center;
  flex-shrink: 0;
}
.oc-step.last {
  width: 31px;
  border-right: 0;
  border-left: 1px solid #8a8a8a;
}
.oc-value {
  flex: 1;
  text-align: right;
  padding-right: 5px;
  color: #a9b4bd;
  font-size: 17px;
}
.tri-down,
.tri-up {
  width: 0;
  height: 0;
  border-left: 5px solid transparent;
  border-right: 5px solid transparent;
}
.tri-down {
  border-top: 6px solid #fff;
}
.tri-up {
  border-bottom: 6px solid #fff;
}
.oc-prices {
  display: flex;
  justify-content: space-between;
}
.oc-price {
  box-sizing: border-box;
  width: 156px;
  height: 58px;
  padding-left: 28px;
  background: linear-gradient(#904c52, #500f14);
  border: 1px solid #a34a4e;
  color: #c4c4c4;
  display: flex;
  align-items: baseline;
  line-height: 54px;
}
.p-small {
  font-size: 18px;
  font-weight: bold;
  letter-spacing: -0.5px;
}
.p-big {
  font-size: 47px;
  letter-spacing: -2.500px;
  margin-left: 6px;
}
.p-sup {
  align-self: flex-start;
  font-size: 17px;
  font-weight: bold;
  line-height: 17px;
  margin-top: 11px;
  margin-left: 7px;
}

/* onglets */
.tabs {
  box-sizing: border-box;
  height: 36px;
  padding-bottom: 4px;
  background: #2d2d2d;
  border-top: 1px solid #9a9a9a;
  border-bottom: 1px solid #9a9a9a;
  display: flex;
  align-items: center;
  flex-shrink: 0;
}
.tab {
  font-size: 17px;
  color: #ececec;
  padding: 0 16px 0 16px;
  border-right: 1px solid #cfcfcf;
  white-space: nowrap;
  line-height: 24px;
}
.tab:first-child {
  padding: 0 19px 0 21px;
}
.tab.no-line {
  padding-right: 20px;
  border-right: 0;
}
.tab.active {
  box-sizing: border-box;
  width: 128px;
  height: 28px;
  padding: 0 10px;
  align-self: flex-start;
  line-height: 28px;
  border: 1px solid #aaa;
  border-top: 0;
  color: #b4b4b4;
  text-align: center;
}
.tab.active + .tab {
  padding-left: 17px;
  padding-right: 18px;
}
.tab-bag {
  margin-left: 22px;
}
.tab-label {
  margin-left: 12px;
  font-size: 17px;
  color: #ececec;
}
.tab-arrows {
  margin-left: auto;
  margin-right: 16px;
  display: flex;
  gap: 26px;
}
.arrow-left,
.arrow-right {
  width: 0;
  height: 0;
  border-top: 5px solid transparent;
  border-bottom: 5px solid transparent;
}
.arrow-left {
  border-right: 4px solid #555;
}
.arrow-right {
  border-left: 4px solid #555;
}

/* solde */
.info {
  box-sizing: border-box;
  height: 38px;
  background: #2d2d2d;
  border-bottom: 1px solid #9a9a9a;
  display: flex;
  align-items: center;
  flex-shrink: 0;
  color: #c8c8c8;
  font-size: 17.200px;
}
.info-close {
  width: 30px;
  height: 100%;
  background: #3a3d4a;
  color: #fff;
  display: flex;
  flex-direction: column;
  align-items: center;
  font: bold 15px "Liberation Sans", sans-serif;
  padding-top: 5px;
  box-sizing: border-box;
}
.info-dash {
  width: 12px;
  height: 1px;
  background: #fff;
  margin-top: 6px;
}
.dot {
  margin-left: 16px;
  width: 16px;
}
.info-item {
  margin-right: 10px;
  white-space: nowrap;
}

/* barre d'etat */
.status {
  height: 31px;
  background: #2d2d2d;
  display: flex;
  align-items: center;
  flex-shrink: 0;
  color: #b4b4b4;
  font-size: 16.800px;
}
.st-help {
  width: 846px;
  padding-left: 3px;
}
.st-cell {
  box-sizing: border-box;
  height: 28px;
  border-left: 1px solid #5e5e5e;
  display: flex;
  align-items: center;
}
.st-default { width: 205px; padding-left: 6px; }
.st-a { width: 155px; }
.st-b { width: 110px; }
.st-c { width: 110px; }
.st-d { width: 103px; }
.st-e { width: 107px; }
.st-f { width: 104px; }
.st-net {
  flex: 1;
  padding-left: 8px;
  gap: 7px;
}
.st-net-text {
  font-size: 17.400px;
}
</style>
